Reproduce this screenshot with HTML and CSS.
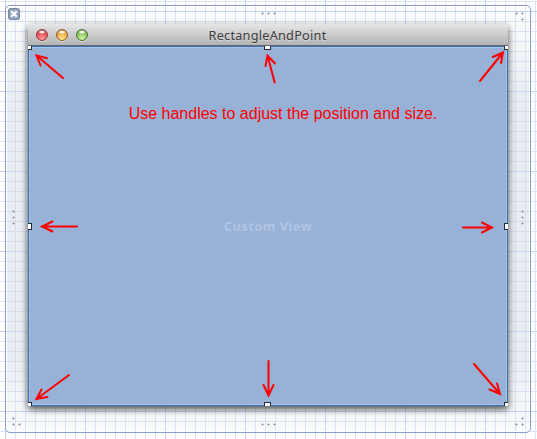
FILE: index.html
```
<!DOCTYPE html>
<html lang="en">
<head>
<meta charset="utf-8">
<title>RectangleAndPoint</title>
<link rel="stylesheet" href="styles.css">
</head>
<body>
<main class="canvas">
  <section class="panel">
    <svg class="close" viewBox="0 0 12 12"><rect x=".5" y=".5" width="11" height="11" rx="2"/><path d="M3.2 3.2 8.8 8.8M8.8 3.2 3.2 8.8"/></svg>
    <article class="window">
      <header class="titlebar">
        <div class="lights"><i class="light red"></i><i class="light amber"></i><i class="light green"></i></div>
        <h1 class="title">RectangleAndPoint</h1>
      </header>
      <div class="view">
        <p class="note">Use handles to adjust the position and size.</p>
        <span class="label">Custom View</span>
      </div>
      <b class="handle top left"></b><b class="handle top center"></b><b class="handle top right"></b>
      <b class="handle middle left"></b><b class="handle middle right"></b>
      <b class="handle bottom left"></b><b class="handle bottom center"></b><b class="handle bottom right"></b>
    </article>
  </section>
  <svg class="overlay" viewBox="0 0 537 439">
    <g class="dots">
      <path d="M262.5 13.5h0M268.5 13.5h0M274.5 13.5h0M516.5 13.5h0M522.5 13.5h0M522.5 19.5h0"/>
      <path d="M13.5 211.5h0M13.5 217.5h0M13.5 223.5h0M522.5 211.5h0M522.5 217.5h0M522.5 223.5h0"/>
      <path d="M13.5 418.5h0M13.5 424.5h0M19.5 424.5h0M262.5 424.5h0M268.5 424.5h0M274.5 424.5h0M522.5 418.5h0M516.5 424.5h0M522.5 424.5h0"/>
    </g>
    <g class="arrows">
      <path d="M63 78 36.5 55.5M47 58.3 36.5 55.5 40.5 65.5"/>
      <path d="M274.7 82.5 267.5 55.5M275 63.5 267.5 55.5 265.5 66"/>
      <path d="M480 81 503 52.5M492.8 57 503 52.5 501 63"/>
      <path d="M77 226.5H42M52.5 221.5 42 226.5 52.5 231.5"/>
      <path d="M463 227.5H492M482 222.5 492 227.5 482 232.5"/>
      <path d="M69 375 36.5 399M41.5 389.5 36.5 399 47.5 397"/>
      <path d="M268.5 361V395.5M263.5 385 268.5 395.5 273.5 385"/>
      <path d="M474 364 500 394M497 383.5 500 394 489.5 389.5"/>
    </g>
  </svg>
</main>
</body>
</html>
```
FILE: styles.css
```
* { box-sizing: border-box; }
body { margin: 0; background: #fff; }
.canvas {
  position: relative;
  width: 537px;
  height: 439px;
  padding: 5px 6px 6px 5px;
  overflow: hidden;
  background:
    repeating-linear-gradient(90deg, transparent 0 5px, #bfd3f2 5px 6px, transparent 6px 80px),
    repeating-linear-gradient(180deg, transparent 0 11px, #bfd3f2 11px 12px, transparent 12px 80px),
    repeating-linear-gradient(90deg, transparent 0 5px, #d8e5f8 5px 6px, transparent 6px 10px),
    repeating-linear-gradient(180deg, transparent 0 1px, #d8e5f8 1px 2px, transparent 2px 10px),
    #fff;
}
.panel {
  position: relative;
  width: 526px;
  height: 428px;
  padding: 18px 22px;
  border: 1px solid #8fa0cf;
  border-radius: 5px;
  background: linear-gradient(rgba(222, 227, 234, .08), rgba(205, 213, 222, .42) 22%, rgba(205, 213, 222, .42) 82%, rgba(222, 227, 234, .15));
  box-shadow: inset 0 0 0 1px rgba(255, 255, 255, .9), 0 0 1px #b6c2e2;
}
.close { position: absolute; left: 2px; top: 2px; width: 12px; height: 12px; }
.close rect { fill: #93a3ba; stroke: #7185a5; }
.close path { stroke: #fff; stroke-width: 2.3; }
.window {
  position: relative;
  display: flex;
  flex-direction: column;
  width: 480px;
  height: 382px;
  border-radius: 4px 4px 0 0;
  box-shadow: 0 3px 7px rgba(0, 0, 0, .7);
}
.titlebar {
  position: relative;
  display: flex;
  align-items: center;
  justify-content: center;
  height: 22px;
  border-radius: 4px 4px 0 0;
  border-bottom: 1px solid #686868;
  background: linear-gradient(#e6e6e6, #b3b3b3);
}
.lights { position: absolute; left: 8px; top: 5px; display: flex; gap: 8px; }
.light { width: 12px; height: 12px; border-radius: 50%; border: 1px solid; box-shadow: 0 1px 0 rgba(255,255,255,.5); }
.red { border-color: #913d3d; background: radial-gradient(ellipse 4px 2px at 5px 2px, #fff 0 30%, transparent), radial-gradient(circle at 50% 85%, #ff9d9d, #e3474b 65%, #a92d32); }
.amber { border-color: #936027; background: radial-gradient(ellipse 4px 2px at 5px 2px, #fff 0 30%, transparent), radial-gradient(circle at 50% 85%, #ffe793, #e9a242 65%, #b56e22); }
.green { border-color: #4a752f; background: radial-gradient(ellipse 4px 2px at 5px 2px, #fff 0 30%, transparent), radial-gradient(circle at 50% 85%, #d1f5a1, #83bd58 65%, #4f8732); }
.title {
  margin: 1px 0 0 -1px;
  font: 400 12.7px/20px "Noto Sans", "Open Sans", sans-serif;
  letter-spacing: .25px;
  color: #3c3c3c;
  white-space: nowrap;
  text-shadow: 0 1px 0 rgba(255,255,255,.4);
}
.view {
  display: flex;
  flex-direction: column;
  align-items: center;
  flex: 1;
  border: 1px solid #3a72b5;
  box-shadow: inset 0 0 0 1px #a9c1e4;
  background: #98b1d6;
}
.note {
  margin: 57px 0 0 30px;
  font: 16px/20px "Liberation Sans", Arial, sans-serif;
  color: #f00;
  white-space: nowrap;
}
.label {
  margin-top: 92px;
  font: 700 13px/20px "Noto Sans", "Open Sans", sans-serif;
  letter-spacing: .4px;
  color: #b2c5e4;
  white-space: nowrap;
}
.handle { position: absolute; width: 4px; height: 4px; background: #fff; border: 0 solid #222b38; }
.top { top: 22px; border-bottom-width: 1px; }
.bottom { bottom: 0; border-top-width: 1px; }
.left { left: 0; border-right-width: 1px; }
.right { right: 0; border-left-width: 1px; }
.center { left: 236px; width: 7px; border-left-width: 1px; border-right-width: 1px; }
.middle { top: 199px; height: 7px; border-top-width: 1px; border-bottom-width: 1px; }
.overlay { position: absolute; left: 0; top: 0; width: 537px; height: 439px; fill: none; }
.dots { stroke: #8b8e94; stroke-width: 2.2; stroke-linecap: round; }
.arrows { stroke: #f00; stroke-width: 2; stroke-linecap: round; stroke-linejoin: miter; }
```
